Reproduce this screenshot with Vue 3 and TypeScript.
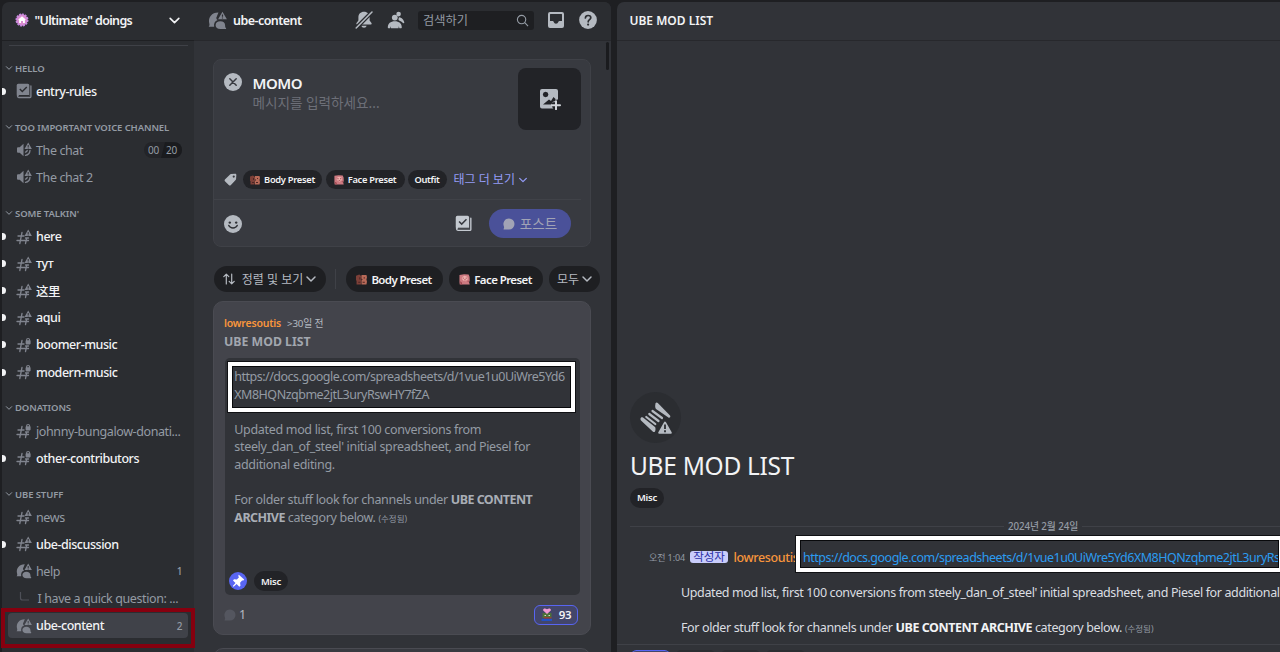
<template>
  <svg class="sprite" aria-hidden="true">
    <symbol id="i-chevron" viewBox="0 0 12 12">
      <path d="M2 4l4 4 4-4" fill="none" stroke="currentColor" stroke-width="1.5" stroke-linecap="round" stroke-linejoin="round" />
    </symbol>
    <symbol id="i-hash-warn" viewBox="0 0 16 16">
      <path d="M2 7h6M1 11.5h11.5M6 3.5L3.800 14.5M10.700 9L9.500 14.5M9.500 9h3" fill="none" stroke="currentColor" stroke-width="1.300" stroke-linecap="round" />
      <path fill-rule="evenodd" d="M12.200.6L15.900 7H8.500zM11.700 2.900v2h1v-2zM11.700 5.500v.9h1v-.9z" fill="currentColor" />
    </symbol>
    <symbol id="i-hash-lock" viewBox="0 0 16 16">
      <path d="M2 7h6M1 11.5h11.5M6 3.5L3.800 14.5M10.700 9L9.500 14.5M9.500 9h3" fill="none" stroke="currentColor" stroke-width="1.300" stroke-linecap="round" />
      <path d="M10.600 4V3a1.500 1.500 0 013 0v1" fill="none" stroke="currentColor" stroke-width="1.100" />
      <rect x="9.600" y="3.200" width="5" height="4.200" rx=".8" fill="currentColor" />
    </symbol>
    <symbol id="i-rules" viewBox="0 0 16 16">
      <path fill-rule="evenodd" d="M2.200.8h9.600a1.500 1.500 0 011.500 1.500V13H2.400A1.700 1.700 0 01.7 11.500V2.300A1.500 1.500 0 012.200.8zM4.300 5.600l-1 1 3 3 5-5.100-1-1-4 4z" fill="currentColor" />
      <path d="M1.500 12v1a1.500 1.500 0 001.300 1.500H14a.9.9 0 00.9-.9V3" fill="none" stroke="currentColor" stroke-width="1.300" stroke-linecap="round" />
      <path d="M2.800 12.500h10.500" stroke="#2b2d31" stroke-width="1" />
    </symbol>
    <symbol id="i-voice" viewBox="0 0 16 16">
      <path d="M7.500 1.800v12.400L3.700 10.800H2A1 1 0 011 9.800V6.200a1 1 0 011-1h1.700z" fill="currentColor" />
      <path d="M9.500 10.200c1-.3 1.600-1 1.700-1.800M9.500 13.300c2.600-.4 4.300-2.200 4.500-4.900" fill="none" stroke="currentColor" stroke-width="1.300" stroke-linecap="round" />
      <path fill-rule="evenodd" d="M12.200.6L15.900 7H8.500zM11.700 2.900v2h1v-2zM11.700 5.500v.9h1v-.9z" fill="currentColor" />
    </symbol>
    <symbol id="i-forum" viewBox="0 0 16 16">
      <path d="M.6 13.200c.9-1 .7-2 .4-3C0 5.300 3.300 1.200 8.800 1.300L7 5.600C7 6.700 7.500 7.300 8.200 7.600 5.700 8.300 4.700 10.500 5.200 13.200z" fill="currentColor" />
      <path d="M10.400 8.700c2.400 0 4 1.400 4 3.300 0 1.100.2 1.800.8 2.600.2.300 0 .6-.3.600h-4.500c-2.400 0-4-1.300-4-3.200s1.600-3.300 4-3.300z" fill="currentColor" />
      <path fill-rule="evenodd" d="M12.200.6L15.900 7H8.500zM11.700 2.900v2h1v-2zM11.700 5.500v.9h1v-.9z" fill="currentColor" />
    </symbol>
    <symbol id="i-bubble" viewBox="0 0 12 12">
      <path d="M6 .5a5.500 5.500 0 110 11H.9c-.5 0-.6-.5-.3-.8.7-.7.5-1.600.2-2.600A5.500 5.500 0 016 .5z" fill="currentColor" />
    </symbol>
    <symbol id="i-updown" viewBox="0 0 12 12">
      <path d="M3.300 11V1.200M.8 3.600l2.500-2.500 2.500 2.500M8.700 1v9.800M6.200 8.400l2.500 2.500 2.500-2.500" fill="none" stroke="currentColor" stroke-width="1.200" stroke-linecap="round" stroke-linejoin="round" />
    </symbol>
    <symbol id="i-body" viewBox="0 0 10 10">
      <path d="M0 1.500L3 .5l2 1.500v3L4.500 9.500H.5V6H0z" fill="#7d4038" />
      <path d="M5 1h4.500L10 3 9.500 5l.5 2-.5 2.500H5V6l1-1-1-1z" fill="#b86a58" />
      <path d="M3 3h1v2H3zM7 3h1v1H7zM6 7h2v1H6zM2 7h2v1H2z" fill="#4c2524" />
    </symbol>
    <symbol id="i-face" viewBox="0 0 12 12">
      <path d="M.5 1l5-.8L10.500.5 11.500 3l.2 4-.7 2 .7 2.500H.8L.5 9 .5 3.500z" fill="#cd7a81" />
      <path d="M4 3l2-1 3 1 .5 3L7 8 4.500 7 3 5z" fill="#f0b2af" />
      <path d="M4 4h1.500v1H4zM7.200 4h1.500v1H7.200zM5.500 6h2v.8h-2zM1 8l2 1 .5 2.500H2zM9 8l1.500-1v2z" fill="#a04650" />
    </symbol>
  </svg>

  <div class="app">
    <nav class="sidebar">
      <header class="guild">
        <svg class="guild-badge" viewBox="0 0 14 14">
          <circle cx="7" cy="7" r="5.700" fill="#d98bd0" stroke="#c58ae0" stroke-width="1.600" stroke-dasharray="2 .9" />
          <path d="M7 3.200l4 3.600h-1.100V10H8V7.900H6V10H4.100V6.800H3z" fill="#fff" />
        </svg>
        <span class="guild-name">"Ultimate" doings</span>
        <svg class="guild-arrow"><use href="#i-chevron" /></svg>
      </header>
      <div class="channels">
        <div class="rule"></div>
        <section v-for="group in groups" :key="group.name">
          <h3 class="category">
            <svg><use href="#i-chevron" /></svg>{{ group.name }}
          </h3>
          <div v-for="ch in group.channels" :key="ch.name" class="channel-row">
            <div class="channel" :class="{ unread: ch.unread, selected: ch.selected }">
              <span v-if="ch.unread && !ch.selected" class="dot"></span>
              <svg v-if="ch.icon === 'thread'" class="ch-icon spine" viewBox="0 0 16 16">
                <path d="M4.500 1v6a2 2 0 002 2H13" fill="none" stroke="currentColor" stroke-width="1.200" />
              </svg>
              <svg v-else class="ch-icon"><use :href="'#i-' + ch.icon" /></svg>
              <span class="ch-name">{{ ch.name }}</span>
              <span v-if="ch.limit" class="limit"><span>00</span><span class="max">{{ ch.limit }}</span></span>
              <span v-if="ch.count" class="count">{{ ch.count }}</span>
            </div>
          </div>
        </section>
      </div>
      <div class="mark-channel"></div>
    </nav>

    <main class="forum">
      <header class="bar">
        <svg class="bar-forum"><use href="#i-forum" /></svg>
        <span class="bar-title">ube-content</span>
        <svg class="bar-icon bell" viewBox="0 0 18 18">
          <path d="M9 .8c3.400 0 5.600 2.300 5.600 5.400v3.200l1.900 2.600c.4.600 0 1.600-.8 1.600H2.300c-.8 0-1.200-1-.8-1.600l1.900-2.600V6.200C3.400 3.100 5.600.8 9 .8z" fill="currentColor" />
          <path d="M6.300 14.800a2.800 2.800 0 005.400 0z" fill="currentColor" />
          <path d="M1.200 17L17 1" stroke="#2b2d31" stroke-width="4" />
          <path d="M1.200 17L17 1" stroke="currentColor" stroke-width="1.500" stroke-linecap="round" />
        </svg>
        <svg class="bar-icon people" viewBox="0 0 18 18">
          <circle cx="7.800" cy="6.600" r="2.900" fill="currentColor" />
          <path d="M.8 16.500C.8 12.500 3.600 10.300 7.800 10.300s7 2.200 7 6.200c0 .5-.3.700-.7.700h-1.700l-.6-1.900-.3 1.900H4.100l-.3-1.900-.6 1.900H1.500c-.4 0-.7-.2-.7-.7z" fill="currentColor" />
          <circle cx="11.600" cy="3.100" r="2.300" fill="currentColor" />
          <path d="M12 6.200c2.700.2 5 2.700 5.300 5.300.1.700-.7 1-1.200.6-1-.9-1.900-1.700-3.500-2.400-.9-.4-1.300-.8-1.100-1.700z" fill="currentColor" />
        </svg>
        <div class="search">
          <span>검색하기</span>
          <svg viewBox="0 0 14 14"><circle cx="6" cy="6" r="4.500" /><path d="M9.400 9.400L13 13" /></svg>
        </div>
        <svg class="bar-icon inbox" viewBox="0 0 18 18">
          <path fill-rule="evenodd" d="M3 1h12a2 2 0 012 2v12a2 2 0 01-2 2H3a2 2 0 01-2-2V3a2 2 0 012-2zM3 3.500V10h2.500c.7 0 1 .4 1.200 1a2.400 2.400 0 004.600 0c.2-.6.5-1 1.200-1H15V3.500a.5.5 0 00-.5-.5h-11a.5.5 0 00-.5.5z" fill="currentColor" />
        </svg>
        <svg class="bar-icon" viewBox="0 0 18 18">
          <circle cx="9" cy="9" r="8.900" fill="currentColor" />
          <path d="M6.400 7c.1-1.600 1.200-2.500 2.700-2.500s2.700.9 2.700 2.300c0 1.900-2.600 1.900-2.600 4" fill="none" stroke="#2b2d31" stroke-width="1.700" stroke-linecap="round" />
          <circle cx="9.100" cy="13.600" r="1.100" fill="#2b2d31" />
        </svg>
      </header>

      <div class="feed">
        <span class="scroll-thumb"></span>
        <section class="composer">
          <div class="compose-top">
            <svg class="round" viewBox="0 0 18 18">
              <circle cx="9" cy="9" r="9" fill="#b5bac1" />
              <path d="M5.800 5.800l6.400 6.400M12.200 5.800l-6.400 6.400" stroke="#383a40" stroke-width="1.500" stroke-linecap="round" />
            </svg>
            <div class="fields">
              <div class="subject">MOMO</div>
              <div class="placeholder">메시지를 입력하세요...</div>
            </div>
            <button class="upload">
              <svg viewBox="0 0 22 22">
                <path fill-rule="evenodd" d="M3 1h14a2 2 0 012 2v8.500c-2-.3-3 .8-3.200 2.800H13V17c0 1.500.5 3 1.500 3.500H3a2 2 0 01-2-2V3a2 2 0 012-2zM3.800 6.500l.8 2 2 .8 2-.8.8-2-.8-2-2-.8-2 .8zM4 16.500h8.500l1-2.500 3-1.200V11l-2-2-2.500 4-2-1.500z" fill="#b5bac1" />
                <path d="M17 13.300v8M13 17.300h8" stroke="#d3d6db" stroke-width="2" stroke-linecap="round" />
              </svg>
            </button>
          </div>
          <div class="tag-row">
            <svg class="tag-icon" viewBox="0 0 14 14">
              <path fill-rule="evenodd" d="M7.500 1.200L12 .8c.8 0 1.300.5 1.300 1.300L13 6.500c0 .4-.2.8-.5 1.100l-5.300 5.600c-.5.5-1.300.5-1.800 0L1 8.900c-.5-.5-.5-1.300 0-1.800l5.500-5.400c.3-.3.6-.5 1-.5zM10.500 2.600a1.200 1.200 0 100 2.400 1.200 1.200 0 000-2.400z" fill="#b5bac1" />
            </svg>
            <span class="chip small body"><svg><use href="#i-body" /></svg>Body Preset</span>
            <span class="chip small face"><svg><use href="#i-face" /></svg>Face Preset</span>
            <span class="chip small outfit">Outfit</span>
            <a class="more">태그 더 보기<svg><use href="#i-chevron" /></svg></a>
          </div>
          <div class="compose-foot">
            <svg class="round" viewBox="0 0 18 18">
              <circle cx="9" cy="9" r="9" fill="#b5bac1" />
              <circle cx="5.800" cy="7.600" r="1.200" fill="#2f3136" /><circle cx="12.200" cy="7.600" r="1.200" fill="#2f3136" />
              <path d="M4.800 10.500c1.600 3.200 6.800 3.200 8.400 0" fill="none" stroke="#2f3136" stroke-width="1.500" stroke-linecap="round" />
            </svg>
            <svg class="foot-rules"><use href="#i-rules" /></svg>
            <button class="post-btn"><svg><use href="#i-bubble" /></svg><span>포스트</span></button>
          </div>
        </section>

        <div class="filters">
          <span class="chip big sort"><svg class="updown"><use href="#i-updown" /></svg>정렬 및 보기<svg class="down"><use href="#i-chevron" /></svg></span>
          <span class="sep"></span>
          <span class="chip big fbody"><svg><use href="#i-body" /></svg>Body Preset</span>
          <span class="chip big fface"><svg><use href="#i-face" /></svg>Face Preset</span>
          <span class="chip big all">모두<svg class="down"><use href="#i-chevron" /></svg></span>
        </div>

        <article class="post">
          <div class="by"><b>lowresoutis</b><span>&gt;30일 전</span></div>
          <h2>UBE MOD LIST</h2>
          <div class="body-box">
            <div class="mark-link"></div>
            <p class="link-text">https://docs.google.com/spreadsheets/d/1vue1u0UiWre5Yd6<br />XM8HQNzqbme2jtL3uryRswHY7fZA</p>
            <p>Updated mod list, first 100 conversions from<br />steely_dan_of_steel' initial spreadsheet, and Piesel for<br />additional editing.</p>
            <p>For older stuff look for channels under <b>UBE CONTENT</b><br /><b>ARCHIVE</b> category below. <small>(수정됨)</small></p>
            <div class="labels">
              <svg class="pin" viewBox="0 0 18 18">
                <circle cx="9" cy="9" r="9" fill="#5865f2" />
                <path d="M9.800 2.800l5.400 4.800-.8 1-1.300-.2-2 2.400.4 2.900-1.200 1-2.700-2.600-3 2.700-.8-.8 2.700-3L4 8.500l1-1.300 2.900.3L10 5.300l-.8-1.400z" fill="#fff" />
              </svg>
              <span class="chip misc">Misc</span>
            </div>
          </div>
          <footer>
            <svg class="replies"><use href="#i-bubble" /></svg><span>1</span>
            <span class="reaction">
              <svg viewBox="0 0 12 13">
                <path d="M1.500 5h9v5h-9z" fill="#4d7138" />
                <path d="M.5 10.800h10.500V13H.5z" fill="#2351c4" />
                <path d="M3 9h7.500v1.500H3z" fill="#8f4336" />
                <path d="M3.500 7.300h1.500v.8H3.500zM7.500 7.300H9v.8H7.500z" fill="#fff" />
                <path d="M6 6L2.200 2.600C1.500 1 3.500-.4 6 1.200 8.500-.4 10.500 1 9.800 2.600z" fill="#f19ad3" />
              </svg>93
            </span>
          </footer>
        </article>
        <div class="post next"></div>
      </div>
    </main>

    <aside class="thread">
      <header class="bar thread-title">UBE MOD LIST</header>
      <div class="messages">
        <div class="thread-icon">
          <svg viewBox="0 0 34 34">
            <path d="M16.500 2.500a1.500 1.500 0 012.300-.6L31 14.500c1 1.200-.3 2.700-1.600 2L17 8c-1-.7-1-4-.5-5.500z" fill="#b5bac1" />
            <path d="M1.500 17.500c.3-1.200 1.500-1.500 2.500-.9l12 9.400c.8.700.6 3.500 0 4.500-.5.7-1.400.8-2 .2L2 19.500c-.5-.6-.7-1.200-.5-2z" fill="#b5bac1" />
            <path d="M13.500 10l9.500 7M10.300 13l9.200 7M7.300 16l9 7" stroke="#b5bac1" stroke-width="2.200" stroke-linecap="round" />
            <path d="M26 20l7 12.500H19z" fill="#2b2d31" stroke="#2b2d31" stroke-width="4" />
            <path d="M26 21.500l5.800 10.300H20.200z" fill="#b5bac1" stroke="#b5bac1" stroke-width="2" stroke-linejoin="round" />
            <path d="M26 23.500v4.500M26 29.300v1.900" stroke="#2b2d31" stroke-width="1.800" />
          </svg>
        </div>
        <h1>UBE MOD LIST</h1>
        <span class="chip misc">Misc</span>
        <div class="date"><span>2024년 2월 24일</span></div>
        <div class="message">
          <span class="time">오전 1:04</span>
          <span class="op">작성자</span>
          <span class="author">lowresoutis</span>
          <a class="url">https://docs.google.com/spreadsheets/d/1vue1u0UiWre5Yd6XM8HQNzqbme2jtL3uryRs</a>
          <div class="mark-url"></div>
        </div>
        <p class="line l1">Updated mod list, first 100 conversions from steely_dan_of_steel' initial spreadsheet, and Piesel for additional</p>
        <p class="line l2">For older stuff look for channels under <b>UBE CONTENT ARCHIVE</b> category below. <small>(수정됨)</small></p>
      </div>
      <footer class="reactions"><span class="mine"></span><span></span><span></span><span></span></footer>
    </aside>
  </div>
</template>

<script setup lang="ts">
interface Channel {
  name: string;
  icon: string;
  unread?: boolean;
  selected?: boolean;
  limit?: number;
  count?: number;
}

interface Group {
  name: string;
  channels: Channel[];
}

const groups: Group[] = [
  { name: 'HELLO', channels: [{ name: 'entry-rules', icon: 'rules', unread: true }] },
  {
    name: 'TOO IMPORTANT VOICE CHANNEL',
    channels: [
      { name: 'The chat', icon: 'voice', limit: 20 },
      { name: 'The chat 2', icon: 'voice' },
    ],
  },
  {
    name: "SOME TALKIN'",
    channels: [
      { name: 'here', icon: 'hash-warn', unread: true },
      { name: 'тут', icon: 'hash-warn', unread: true },
      { name: '这里', icon: 'hash-warn', unread: true },
      { name: 'aqui', icon: 'hash-warn', unread: true },
      { name: 'boomer-music', icon: 'hash-lock', unread: true },
      { name: 'modern-music', icon: 'hash-lock', unread: true },
    ],
  },
  {
    name: 'DONATIONS',
    channels: [
      { name: 'johnny-bungalow-donati...', icon: 'hash-lock' },
      { name: 'other-contributors', icon: 'hash-lock', unread: true },
    ],
  },
  {
    name: 'UBE STUFF',
    channels: [
      { name: 'news', icon: 'hash-warn' },
      { name: 'ube-discussion', icon: 'hash-warn', unread: true },
      { name: 'help', icon: 'forum', count: 1 },
      { name: 'I have a quick question: ...', icon: 'thread' },
      { name: 'ube-content', icon: 'forum', unread: true, selected: true, count: 2 },
    ],
  },
];
</script>

<style>
body {
  margin: 0;
  overflow: hidden;
  background: #1e1f22;
}
</style>

<style scoped>
.sprite {
  position: absolute;
  width: 0;
  height: 0;
}

.app {
  display: flex;
  box-sizing: border-box;
  width: 1280px;
  height: 652px;
  padding: 2px 0 0 2px;
  overflow: hidden;
  background: #1e1f22;
  color: #dbdee1;
  font-family: 'Noto Sans', 'Noto Sans CJK KR', 'Noto Sans CJK SC', sans-serif;
  font-size: 12.5px;
}

h1, h2, h3, p {
  margin: 0;
}

svg {
  display: block;
  flex: none;
}

button {
  border: 0;
  padding: 0;
  font: inherit;
}

/* sidebar */
.sidebar {
  position: relative;
  flex: none;
  width: 192px;
  background: #2b2d31;
  border-radius: 7px 0 0 0;
}

.guild {
  display: flex;
  align-items: center;
  box-sizing: border-box;
  height: 39px;
  padding: 0 13px 2px 13px;
  border-bottom: 1px solid #1f2023;
  color: #f2f3f5;
  font-weight: 600;
  letter-spacing: -0.65px;
}

.guild-badge {
  width: 14px;
  height: 14px;
}

.guild-name {
  flex: 1;
  margin-left: 5.5px;
}

.guild-arrow {
  width: 13px;
  height: 13px;
}

.channels {
  padding-top: 4px;
}

.rule {
  height: 1px;
  margin: 0 6px 12.5px 7px;
  background: #3f4147;
}

.category {
  display: flex;
  align-items: center;
  height: 19px;
  color: #949ba4;
  font-size: 9.5px;
  font-weight: 600;
  letter-spacing: -0.1px;
  white-space: nowrap;
}

.category svg {
  width: 8px;
  height: 8px;
  margin: 0 2px 0 3px;
}

section + section .category {
  margin-top: 13px;
}

.channel-row {
  padding: 1.25px 6px 0.85px 6px;
}

.channel {
  position: relative;
  display: flex;
  align-items: center;
  box-sizing: border-box;
  height: 25px;
  padding: 0 6px 0 8px;
  border-radius: 4px;
  color: #949ba4;
  letter-spacing: -0.4px;
  white-space: nowrap;
}

.channel.unread {
  color: #f2f3f5;
  font-weight: 550;
  letter-spacing: -0.45px;
}

.channel.selected {
  background: #404249;
}

.dot {
  position: absolute;
  left: -6px;
  width: 4px;
  height: 7px;
  border-radius: 0 4px 4px 0;
  background: #f2f3f5;
}

.ch-icon {
  width: 16px;
  height: 16px;
  margin-right: 4px;
  color: #80848e;
}

.spine {
  margin-right: 5.5px;
  color: #4e5058;
}

.ch-name {
  flex: 1;
}

.count {
  font-size: 10px;
  font-weight: 500;
  color: #949ba4;
}

.limit {
  display: flex;
  width: 38px;
  height: 16px;
  overflow: hidden;
  border-radius: 8px;
  background: #232428;
  font-size: 10px;
  line-height: 16px;
  letter-spacing: -0.1px;
}

.limit span {
  box-sizing: border-box;
  width: 17px;
  padding-left: 4px;
}

.limit .max {
  width: 21px;
  padding-left: 5px;
  background: #1a1b1e;
  clip-path: polygon(4px 0, 100% 0, 100% 100%, 0 100%);
}

.mark-channel {
  position: absolute;
  left: -1px;
  top: 606px;
  box-sizing: border-box;
  width: 194px;
  height: 40px;
  border: 4px solid #86000f;
}

/* shared header */
.bar {
  display: flex;
  align-items: center;
  box-sizing: border-box;
  height: 39px;
  padding-bottom: 2px;
  border-bottom: 1px solid #27282c;
  color: #b5bac1;
}

.forum {
  display: flex;
  flex-direction: column;
  flex: none;
  width: 417px;
  overflow: hidden;
  background: #313338;
  border-radius: 0 7px 0 0;
}

.forum .bar {
  flex: none;
  padding-left: 14px;
  background: #2b2d31;
}

.bar-forum {
  width: 19px;
  height: 19px;
  color: #80848e;
}

.bar-title {
  width: 122px;
  margin-left: 6px;
  color: #f2f3f5;
  font-weight: 600;
  letter-spacing: -0.55px;
}

.bar-icon {
  width: 18px;
  height: 18px;
}

.people {
  margin-left: 14px;
}

.search {
  display: flex;
  align-items: center;
  justify-content: space-between;
  box-sizing: border-box;
  width: 116px;
  height: 19px;
  margin: 0 13px;
  padding: 0 5px;
  border-radius: 3px;
  background: #1e1f22;
  color: #949ba4;
  font-size: 12.2px;
}

.search svg {
  width: 13px;
  height: 13px;
  fill: none;
  stroke: currentColor;
  stroke-width: 1.2;
}

.inbox {
  margin-right: 14px;
}

.feed {
  position: relative;
  flex: 1;
  padding: 18px 20px 0 19px;
}

.scroll-thumb {
  position: absolute;
  right: 2px;
  top: 1px;
  width: 3px;
  height: 28px;
  border-radius: 2px;
  background: #1a1b1e;
}

.composer {
  box-sizing: border-box;
  height: 188px;
  border: 1px solid #3f4147;
  border-radius: 8px;
  background: #383a40;
}

.compose-top {
  display: flex;
  height: 101.5px;
  padding: 8px 9px 0 10px;
}

.round {
  width: 18px;
  height: 18px;
}

.compose-top .round {
  margin-top: 5px;
}

.fields {
  flex: 1;
  padding-left: 10.5px;
}

.subject {
  margin-top: 4.5px;
  color: #f2f3f5;
  font-size: 15px;
  font-weight: 600;
  line-height: 20px;
  letter-spacing: -0.5px;
}

.placeholder {
  margin-top: 1px;
  color: #6d6f78;
  font-size: 13.6px;
  line-height: 17px;
}

.upload {
  display: flex;
  align-items: center;
  justify-content: center;
  width: 63px;
  height: 62px;
  border-radius: 8px;
  background: #222327;
}

.upload svg {
  width: 22px;
  height: 22px;
}

.tag-row {
  display: flex;
  align-items: center;
  height: 20px;
  padding-left: 10px;
}

.tag-icon {
  width: 13px;
  height: 13px;
  margin-right: 6px;
}

.chip {
  display: inline-flex;
  align-items: center;
  justify-content: center;
  box-sizing: border-box;
  background: #222327;
  color: #f2f3f5;
  font-weight: 600;
  white-space: nowrap;
}

.chip.small {
  height: 19px;
  margin-right: 4px;
  border-radius: 10px;
  font-size: 9.3px;
  letter-spacing: -0.28px;
}

.small svg {
  width: 10px;
  height: 10px;
  margin-right: 4px;
}

.small.body,
.small.face {
  width: 79px;
}

.small.face {
  margin-left: -0.5px;
}

.small.outfit {
  width: 39px;
  margin-left: -1px;
}

.more {
  display: flex;
  align-items: center;
  margin-left: 3px;
  color: #949cf7;
  font-size: 12px;
  line-height: 18px;
}

.more svg {
  width: 10px;
  height: 10px;
  margin-left: 3px;
}

.compose-foot {
  display: flex;
  align-items: center;
  height: 47px;
  margin: 9.5px 9px 0 0;
  padding: 0 10px;
  border-top: 1px solid #404248;
}

.foot-rules {
  width: 17px;
  height: 17px;
  margin: 0 17px 0 auto;
  color: #c4c9d0;
}

.post-btn {
  display: flex;
  align-items: center;
  justify-content: center;
  width: 82px;
  height: 29px;
  border-radius: 15px;
  background: #4a5199;
  color: #a1a3b5;
  font-size: 13.5px;
}

.post-btn svg {
  width: 12px;
  height: 12px;
  margin-right: 5px;
}

.post-btn span {
  padding-bottom: 2px;
}

.filters {
  display: flex;
  align-items: center;
  height: 26px;
  margin: 19px -9px 9px 1px;
}

.chip.big {
  height: 26px;
  border-radius: 13px;
  background: #1e1f22;
  font-size: 11.5px;
  letter-spacing: -0.6px;
}

.big svg {
  width: 11px;
  height: 11px;
  margin-right: 4px;
}

.big .down {
  width: 12px;
  height: 12px;
  margin: 0 0 0 2px;
}

.chip.sort,
.chip.all {
  width: 112px;
  color: #b5bac1;
  font-size: 12px;
  font-weight: 400;
  letter-spacing: 0;
}

.chip.sort .updown {
  width: 12px;
  height: 12px;
  margin-right: 7px;
}

.sep {
  width: 1px;
  height: 20px;
  margin: 0 9.5px 0 9px;
  background: #3f4147;
}

.chip.fbody {
  width: 97px;
  margin-right: 6px;
}

.chip.fface {
  width: 94px;
  margin-right: 6px;
}

.chip.all {
  width: 51px;
  padding-left: 2px;
}

.post {
  box-sizing: border-box;
  height: 334px;
  padding: 12px 10px 0;
  border: 1px solid #4a4b52;
  border-radius: 10px;
  background: #43444b;
}

.by {
  display: flex;
  align-items: center;
  height: 18px;
  color: #b5bac1;
  font-size: 9.8px;
  letter-spacing: -0.2px;
}

.by b {
  margin-right: 6px;
  color: #f9963c;
  font-size: 10.5px;
  font-weight: 600;
}

.post h2 {
  margin: 1px 0 7px;
  color: #a2a7af;
  font-size: 12.3px;
  font-weight: 700;
  line-height: 18px;
}

.body-box {
  position: relative;
  box-sizing: border-box;
  width: 355px;
  height: 237px;
  margin-left: 1px;
  padding: 10.3px 0 0 9.3px;
  border-radius: 5px;
  background: #313338;
  color: #949ba4;
  letter-spacing: -0.32px;
  white-space: nowrap;
}

.body-box p {
  margin-bottom: 17.55px;
  line-height: 17.55px;
}

.body-box .link-text {
  letter-spacing: -0.5px;
}

.body-box b {
  color: #a9aeb6;
  font-weight: 700;
  letter-spacing: -0.55px;
}

small {
  color: #949ba4;
  font-size: 8.5px;
  letter-spacing: 0;
}

.mark-link,
.mark-url {
  position: absolute;
  box-sizing: border-box;
  border: 4px solid #fff;
  box-shadow: 0 0 0 1px #101114, inset 0 0 0 1px #08090b;
}

.mark-link {
  left: 3px;
  top: 4px;
  width: 347px;
  height: 50px;
}

.labels {
  position: absolute;
  left: 4px;
  bottom: 4px;
  display: flex;
  align-items: center;
}

.pin {
  width: 18px;
  height: 18px;
  margin-right: 7px;
}

.chip.misc {
  width: 34px;
  height: 20px;
  border-radius: 10px;
  font-size: 9.5px;
  letter-spacing: -0.2px;
}

.post footer {
  display: flex;
  align-items: center;
  height: 39px;
  color: #b5bac1;
}

.replies {
  width: 12px;
  height: 12px;
  margin-right: 3px;
  color: #54565f;
}

.reaction {
  display: flex;
  align-items: center;
  justify-content: center;
  box-sizing: border-box;
  width: 44px;
  height: 20px;
  margin: 0 2px 0 auto;
  border: 1px solid #5865f2;
  border-radius: 6px;
  background: #43466a;
  color: #f2f3f5;
  font-size: 11.5px;
  font-weight: 600;
  letter-spacing: -0.4px;
}

.reaction svg {
  width: 12px;
  height: 13px;
  margin-right: 6px;
}

.post.next {
  margin-top: 13px;
  background: #383a40;
}

/* thread */
.thread {
  display: flex;
  flex-direction: column;
  flex: none;
  width: 663px;
  margin-left: 6px;
  overflow: hidden;
  background: #313338;
  border-radius: 7px 0 0 0;
}

.thread-title {
  flex: none;
  padding-left: 12.5px;
  color: #f2f3f5;
  font-size: 12px;
  font-weight: 600;
}

.messages {
  display: flex;
  flex-direction: column;
  justify-content: flex-end;
  flex: 1;
  padding: 0 0 6px 13px;
}

.thread-icon {
  display: flex;
  align-items: center;
  justify-content: center;
  width: 51px;
  height: 51px;
  border-radius: 50%;
  background: #2b2d31;
}

.thread-icon svg {
  width: 34px;
  height: 34px;
}

h1 {
  margin: 6px 0 5.5px;
  color: #f2f3f5;
  font-size: 24.5px;
  font-weight: 430;
  line-height: 33px;
  letter-spacing: -0.3px;
}

.date {
  display: flex;
  align-items: center;
  height: 18px;
  margin: 9.5px 0 13px;
  color: #949ba4;
  font-size: 9.8px;
  font-weight: 500;
  letter-spacing: -0.1px;
}

.date::before,
.date::after {
  content: '';
  height: 1px;
  background: #3f4147;
}

.date::before {
  width: 374px;
}

.date::after {
  flex: 1;
}

.date span {
  width: 78px;
  text-align: center;
}

.message {
  position: relative;
  display: flex;
  align-items: center;
  height: 18px;
  padding-left: 19px;
  white-space: nowrap;
}

.message span {
  flex: none;
}

.time {
  width: 41px;
  color: #949ba4;
  font-size: 9px;
  letter-spacing: -0.1px;
}

.op {
  width: 38px;
  height: 12px;
  border-radius: 3px;
  background: #c9cdfb;
  color: #2a2fa5;
  font-size: 11.5px;
  line-height: 12px;
  text-align: center;
}

.author {
  width: 69.5px;
  margin-left: 5.5px;
  color: #f9963c;
  font-weight: 500;
  letter-spacing: -0.35px;
}

.url {
  color: #2c9cf0;
  letter-spacing: -0.49px;
}

.mark-url {
  left: 166px;
  top: -12px;
  width: 487px;
  height: 36px;
}

.line {
  padding-left: 51px;
  line-height: 18px;
  letter-spacing: -0.37px;
  white-space: nowrap;
}

.line b {
  color: #f2f3f5;
  font-weight: 700;
  letter-spacing: -0.45px;
}

.l1 {
  margin: 18px 0 17px;
}

.reactions {
  display: flex;
  gap: 6px;
  height: 2px;
  padding: 5px 0 0 14px;
  border-top: 1px solid #3f4147;
}

.reactions span {
  width: 39px;
  height: 10px;
  border-radius: 6px;
  background: #2b2d31;
}

.reactions .mine {
  border-top: 1px solid #5865f2;
  background: #43466a;
}
</style>
